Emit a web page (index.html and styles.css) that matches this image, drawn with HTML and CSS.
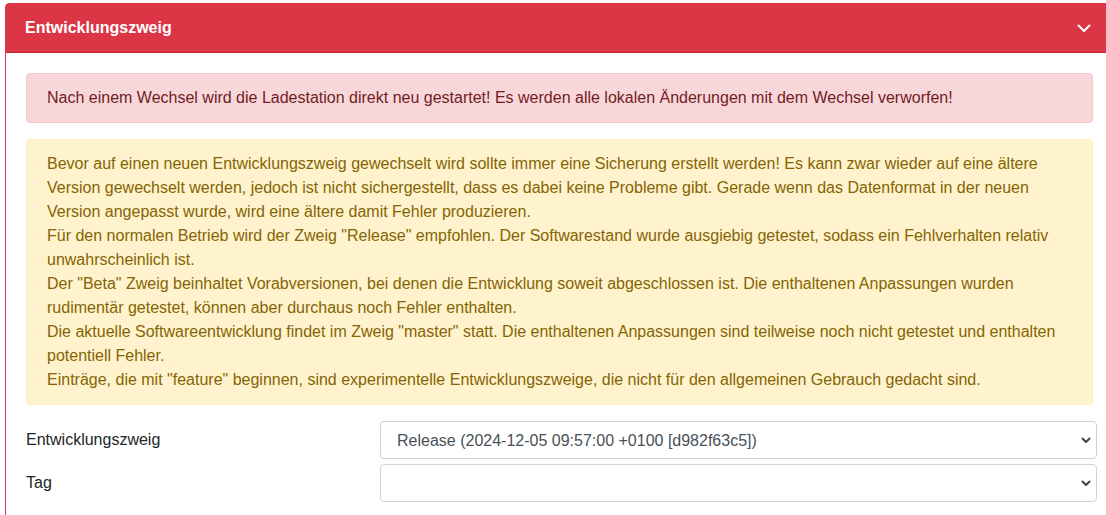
FILE: index.html
```html
<!DOCTYPE html>
<html lang="de">
<head>
  <meta charset="UTF-8">
  <title>Entwicklungszweig</title>
  <link rel="stylesheet" href="styles.css">
</head>
<body>
  <div class="card">
    <div class="card-header">
      <span>Entwicklungszweig</span>
      <svg class="collapse-icon" width="14" height="9" viewBox="0 0 14 9">
        <path d="M1.5 1.5 L7 7 L12.5 1.5" fill="none" stroke="#fff" stroke-width="2" stroke-linecap="round" stroke-linejoin="round"/>
      </svg>
    </div>
    <div class="card-body">
      <div class="alert alert-danger">
        Nach einem Wechsel wird die Ladestation direkt neu gestartet! Es werden alle lokalen Änderungen mit dem Wechsel verworfen!
      </div>
      <div class="alert alert-warning">
        Bevor auf einen neuen Entwicklungszweig gewechselt wird sollte immer eine Sicherung erstellt werden! Es kann zwar wieder auf eine ältere Version gewechselt werden, jedoch ist nicht sichergestellt, dass es dabei keine Probleme gibt. Gerade wenn das Datenformat in der neuen Version angepasst wurde, wird eine ältere damit Fehler produzieren.<br>
        Für den normalen Betrieb wird der Zweig "Release" empfohlen. Der Softwarestand wurde ausgiebig getestet, sodass ein Fehlverhalten relativ unwahrscheinlich ist.<br>
        Der "Beta" Zweig beinhaltet Vorabversionen, bei denen die Entwicklung soweit abgeschlossen ist. Die enthaltenen Anpassungen wurden rudimentär getestet, können aber durchaus noch Fehler enthalten.<br>
        Die aktuelle Softwareentwicklung findet im Zweig "master" statt. Die enthaltenen Anpassungen sind teilweise noch nicht getestet und enthalten potentiell Fehler.<br>
        Einträge, die mit "feature" beginnen, sind experimentelle Entwicklungszweige, die nicht für den allgemeinen Gebrauch gedacht sind.
      </div>
      <div class="form-grid">
        <label for="branch">Entwicklungszweig</label>
        <div class="select-wrap">
          <select id="branch">
            <option>Release (2024-12-05 09:57:00 +0100 [d982f63c5])</option>
          </select>
          <svg class="select-arrow" width="10" height="7" viewBox="0 0 10 7">
            <path d="M1.5 1.5 L5 5 L8.5 1.5" fill="none" stroke="#444" stroke-width="2" stroke-linecap="round" stroke-linejoin="round"/>
          </svg>
        </div>
        <label for="tag">Tag</label>
        <div class="select-wrap">
          <select id="tag">
            <option></option>
          </select>
          <svg class="select-arrow" width="10" height="7" viewBox="0 0 10 7">
            <path d="M1.5 1.5 L5 5 L8.5 1.5" fill="none" stroke="#444" stroke-width="2" stroke-linecap="round" stroke-linejoin="round"/>
          </svg>
        </div>
      </div>
    </div>
  </div>
</body>
</html>
```

FILE: styles.css
```css
html, body {
  overflow: hidden;
}

body {
  margin: 0;
  background: #fff;
  color: #212529;
  font-family: "Liberation Sans", Arial, sans-serif;
  font-size: 16px;
  line-height: 24px;
}

.card {
  margin: 3px 0 0 5px;
  width: 1110px;
  border: 1px solid #dc3545;
  border-radius: 4px;
  box-sizing: border-box;
}

.card-header {
  display: flex;
  justify-content: space-between;
  align-items: center;
  background: #dc3545;
  color: #fff;
  font-weight: bold;
  padding: 12px 20px 12px 19px;
  border-bottom: 1px solid #c82333;
}

.collapse-icon {
  display: block;
  margin-right: 3px;
}

.card-body {
  padding: 20px 20px 20px 20px;
  width: 1067px;
}

.alert {
  padding: 12px 20px;
  margin-bottom: 16px;
  border: 1px solid transparent;
  border-radius: 4px;
}

.alert-danger {
  background: #f8d7da;
  border-color: #f5c6cb;
  color: #721c24;
}

.alert-warning {
  background: #fff3cd;
  border-color: #ffeeba;
  color: #856404;
}

.form-grid {
  display: grid;
  grid-template-columns: 354px 1fr;
  row-gap: 5px;
  align-items: center;
  margin-right: -4px;
}

.select-wrap {
  position: relative;
}

select {
  appearance: none;
  -webkit-appearance: none;
  display: block;
  width: 100%;
  height: 38px;
  padding: 6px 30px 6px 16px;
  font-family: "Liberation Sans", Arial, sans-serif;
  font-size: 16px;
  color: #495057;
  background: #fff;
  border: 1px solid #ced4da;
  border-radius: 4px;
}

.select-arrow {
  position: absolute;
  right: 6px;
  top: 16px;
  pointer-events: none;
}
```
